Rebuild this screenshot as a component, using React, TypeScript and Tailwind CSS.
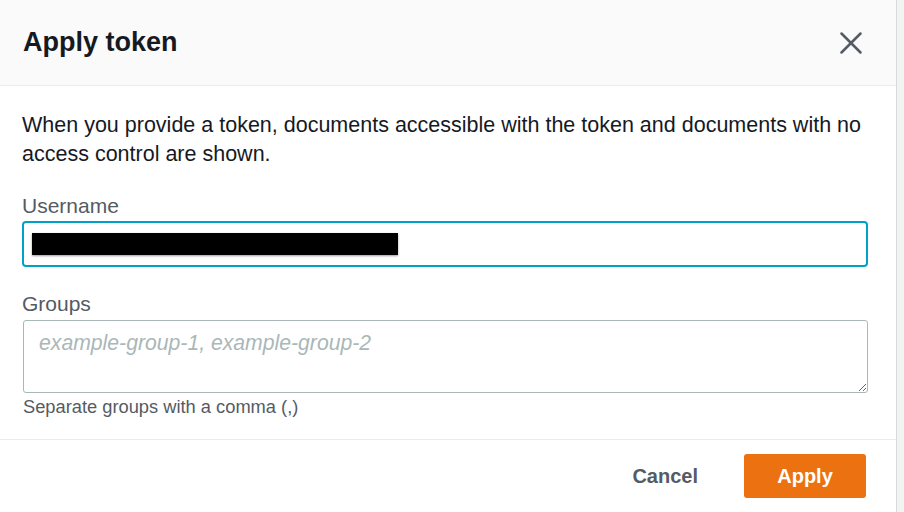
import { X } from "lucide-react";

export default function App() {
  return (
    <div className="flex h-[512px] w-[904px] bg-[#f2f3f3] font-['Liberation_Sans',Arial,sans-serif]">
      <div className="flex w-[897px] flex-col border-r border-[#d5dbdb] bg-white">
        {/* Header */}
        <div className="flex h-[86px] shrink-0 items-center justify-between border-b border-[#eaeded] bg-[#fafafa] pl-[23px] pr-[26px]">
          <h1 className="pb-[1px] text-[27px] font-bold text-[#16191f]">Apply token</h1>
          <button className="text-[#545b64]">
            <X className="h-[38px] w-[38px]" strokeWidth={1.6} />
          </button>
        </div>

        {/* Body */}
        <div className="flex flex-col pl-[22px] pr-[28px] pt-[25px]">
          <p className="text-[21.5px] leading-[29px] text-[#16191f]">
            When you provide a token, documents accessible with the token and documents with no access control are shown.
          </p>

          <label className="mt-[25px] text-[21px] leading-[24px] text-[#545b64]">Username</label>
          <div className="mt-[3px] flex h-[46px] items-center rounded-[4px] border-2 border-[#00a1c9] pl-[8px]">
            <div className="h-[22px] w-[366px] bg-black shadow-[0_1px_2px_rgba(0,0,0,0.4)]" />
          </div>

          <label className="mt-[25px] text-[21px] leading-[24px] text-[#545b64]">Groups</label>
          <textarea
            className="ml-[1px] mt-[4px] h-[73px] w-[845px] resize-y rounded-[3px] border border-[#aab7b8] px-[15px] py-[8px] text-[21.2px] italic leading-[28px] text-[#16191f] outline-none placeholder:text-[#aab7b8]"
            placeholder="example-group-1, example-group-2"
          />
          <p className="ml-[1px] mt-[3px] text-[18.3px] leading-[22px] text-[#545b64]">Separate groups with a comma (,)</p>
        </div>

        {/* Footer */}
        <div className="mt-auto flex h-[73px] items-center justify-end gap-[46px] border-t border-[#eaeded] pr-[30px]">
          <button className="text-[20px] font-bold text-[#545b64]">Cancel</button>
          <button className="flex h-[44px] w-[122px] items-center justify-center rounded-[3px] bg-[#ec7211] text-[20px] font-bold text-white">
            Apply
          </button>
        </div>
      </div>
    </div>
  );
}
